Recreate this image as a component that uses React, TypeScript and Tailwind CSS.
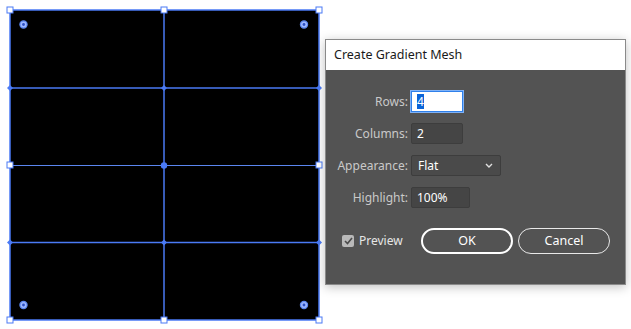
import React from 'react';

const BLUE = '#4a7af5';

/** Selected mesh object on the artboard, drawn as SVG. */
function MeshArtwork() {
  const cols = [10, 164, 319];
  const diamond = (x: number, y: number) => `${x},${y - 3} ${x + 3},${y} ${x},${y + 3} ${x - 3},${y}`;

  return (
    <svg width="330" height="329" viewBox="0 0 330 329" className="block shrink-0">
      <rect x="10" y="10" width="309" height="310" fill="#000" />
      {/* mesh lines */}
      <rect x="10" y="10" width="309" height="310" fill="none" stroke={BLUE} strokeWidth="1.5" />
      <line x1="164" y1="10" x2="164" y2="320" stroke={BLUE} strokeWidth="1.5" />
      <line x1="10" y1="88" x2="319" y2="88" stroke={BLUE} strokeWidth="1.5" />
      <line x1="10" y1="165.5" x2="319" y2="165.5" stroke="#5b86f0" strokeWidth="1" />
      <line x1="10" y1="242.5" x2="319" y2="242.5" stroke={BLUE} strokeWidth="1.5" />

      {/* mesh points */}
      {[88, 242.5].map((y) =>
        cols.map((x) => <polygon key={`${x}-${y}`} points={diamond(x, y)} fill={BLUE} />)
      )}
      <circle cx="164" cy="165.5" r="3.2" fill={BLUE} />

      {/* bounding box handles */}
      {[
        [10, 10], [164, 10], [319, 10],
        [10, 165], [319, 165],
        [10, 320], [164, 320], [319, 320],
      ].map(([x, y]) => (
        <rect key={`h${x}-${y}`} x={x - 3} y={y - 3} width="6" height="6" fill="#fff" stroke={BLUE} strokeWidth="1" />
      ))}

      {/* corner widgets */}
      {[
        [23.5, 24.5], [304, 24.5], [23.5, 305], [304, 305],
      ].map(([x, y]) => (
        <g key={`c${x}-${y}`}>
          <circle cx={x} cy={y} r="3.6" fill="#9db8ff" stroke="#5b86f0" strokeWidth="1.2" />
          <circle cx={x} cy={y} r="1.4" fill="#2d4fc4" />
        </g>
      ))}
    </svg>
  );
}

function Field({ label, children }: { label: string; children: React.ReactNode }) {
  return (
    <div className="flex items-center">
      <span className="w-[85px] pr-[3px] text-right text-[#c9c9c9]">{label}</span>
      {children}
    </div>
  );
}

export default function App() {
  return (
    <div
      className="flex h-[329px] w-[631px] overflow-hidden bg-white text-[12px]"
      style={{ fontFamily: '"Noto Sans", "Liberation Sans", sans-serif' }}
    >
      <MeshArtwork />

      {/* Create Gradient Mesh dialog */}
      <div className="ml-[-5px] mt-[39px] flex h-[246px] w-[301px] shrink-0 flex-col border border-[#8a8a8a] bg-[#535353] shadow-[0_2px_10px_rgba(0,0,0,0.25)]">
        <div className="flex h-[30px] items-center bg-white pl-[8px] text-[12.5px] text-[#1a1a1a]">
          Create Gradient Mesh
        </div>

        <div className="flex flex-col gap-[11px] pt-[21px]">
          <Field label="Rows:">
            <div className="flex h-[21px] w-[52px] items-center border border-[#2f80ea] bg-white pl-[5px] outline outline-1 outline-[#7fb2f7]">
              <span className="bg-[#0a64d8] leading-[15px] text-white">4</span>
            </div>
          </Field>
          <Field label="Columns:">
            <div className="flex h-[21px] w-[52px] items-center rounded-[2px] border border-[#3d3d3d] bg-[#454545] pl-[5px] text-white">
              2
            </div>
          </Field>
          <Field label="Appearance:">
            <div className="flex h-[21px] w-[90px] items-center justify-between rounded-[2px] border border-[#3d3d3d] bg-[#4a4a4a] pl-[6px] pr-[7px] text-white">
              <span>Flat</span>
              <svg width="8" height="5" viewBox="0 0 8 5">
                <path d="M1 1 L4 4 L7 1" fill="none" stroke="#e0e0e0" strokeWidth="1.4" />
              </svg>
            </div>
          </Field>
          <Field label="Highlight:">
            <div className="flex h-[21px] w-[59px] items-center rounded-[2px] border border-[#3d3d3d] bg-[#454545] pl-[5px] text-white">
              100%
            </div>
          </Field>
        </div>

        <div className="mt-[20px] flex items-center pl-[16px]">
          <label className="flex w-[79px] items-center gap-[5px] text-[#e6e6e6]">
            <span className="flex h-[12px] w-[12px] items-center justify-center rounded-[2px] bg-[#b9b9b9]">
              <svg width="9" height="8" viewBox="0 0 9 8">
                <path d="M1 4 L3.5 6.5 L8 1" fill="none" stroke="#4a4a4a" strokeWidth="1.6" />
              </svg>
            </span>
            Preview
          </label>
          <button className="flex h-[26px] w-[92px] items-center justify-center rounded-full border-2 border-white text-[12.5px] text-white">
            OK
          </button>
          <button className="ml-[5px] flex h-[26px] w-[92px] items-center justify-center rounded-full border border-[#e8e8e8] text-[12.5px] text-white">
            Cancel
          </button>
        </div>
      </div>
    </div>
  );
}
